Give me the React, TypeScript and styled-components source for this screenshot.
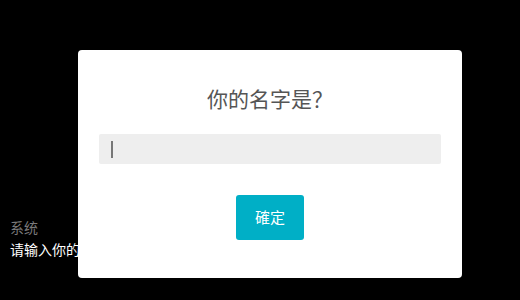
import React from "react";
import styled, { createGlobalStyle } from "styled-components";

const Global = createGlobalStyle`
  html, body { margin: 0; padding: 0; background: #000; width: 520px; height: 300px; overflow: hidden; }
  body { font-family: "Noto Sans CJK SC", "Noto Sans", sans-serif; }
`;

const Screen = styled.div`
  position: relative;
  width: 520px;
  height: 300px;
  background: #000;
  display: flex;
  flex-direction: column;
  justify-content: flex-end;
`;

const Log = styled.div`
  display: flex;
  flex-direction: column;
  padding: 0 0 40px 10px;
  font-size: 14px;
  line-height: 22px;
`;

const Speaker = styled.div`
  color: #7a7a7a;
`;

const Line = styled.div`
  color: #fff;
  white-space: nowrap;
`;

const Dialog = styled.div`
  position: absolute;
  left: 78px;
  top: 50px;
  width: 384px;
  height: 228px;
  box-sizing: border-box;
  background: #fff;
  border-radius: 4px;
  padding: 34px 21px 0;
  display: flex;
  flex-direction: column;
  align-items: center;
`;

const Title = styled.div`
  font-size: 21px;
  line-height: 29px;
  color: #555;
  text-align: center;
`;

const Field = styled.div`
  margin-top: 21px;
  width: 100%;
  height: 30px;
  box-sizing: border-box;
  background: #eeeeee;
  border-radius: 2px;
  display: flex;
  align-items: center;
  padding-left: 12px;
`;

const Caret = styled.span`
  display: block;
  width: 2px;
  height: 17px;
  background: #777;
`;

const Button = styled.button`
  margin-top: 31px;
  width: 68px;
  height: 45px;
  border: none;
  border-radius: 3px;
  background: #00afc6;
  color: #fff;
  font-family: "Noto Sans CJK TC", "Noto Sans CJK SC", sans-serif;
  font-size: 15px;
  line-height: 20px;
  padding: 0 0 2px;
`;

export default function App() {
  return (
    <>
      <Global />
      <Screen>
        <Log>
          <Speaker>系统</Speaker>
          <Line>请输入你的名字</Line>
        </Log>
        <Dialog>
          <Title>你的名字是？</Title>
          <Field>
            <Caret />
          </Field>
          <Button>確定</Button>
        </Dialog>
      </Screen>
    </>
  );
}
